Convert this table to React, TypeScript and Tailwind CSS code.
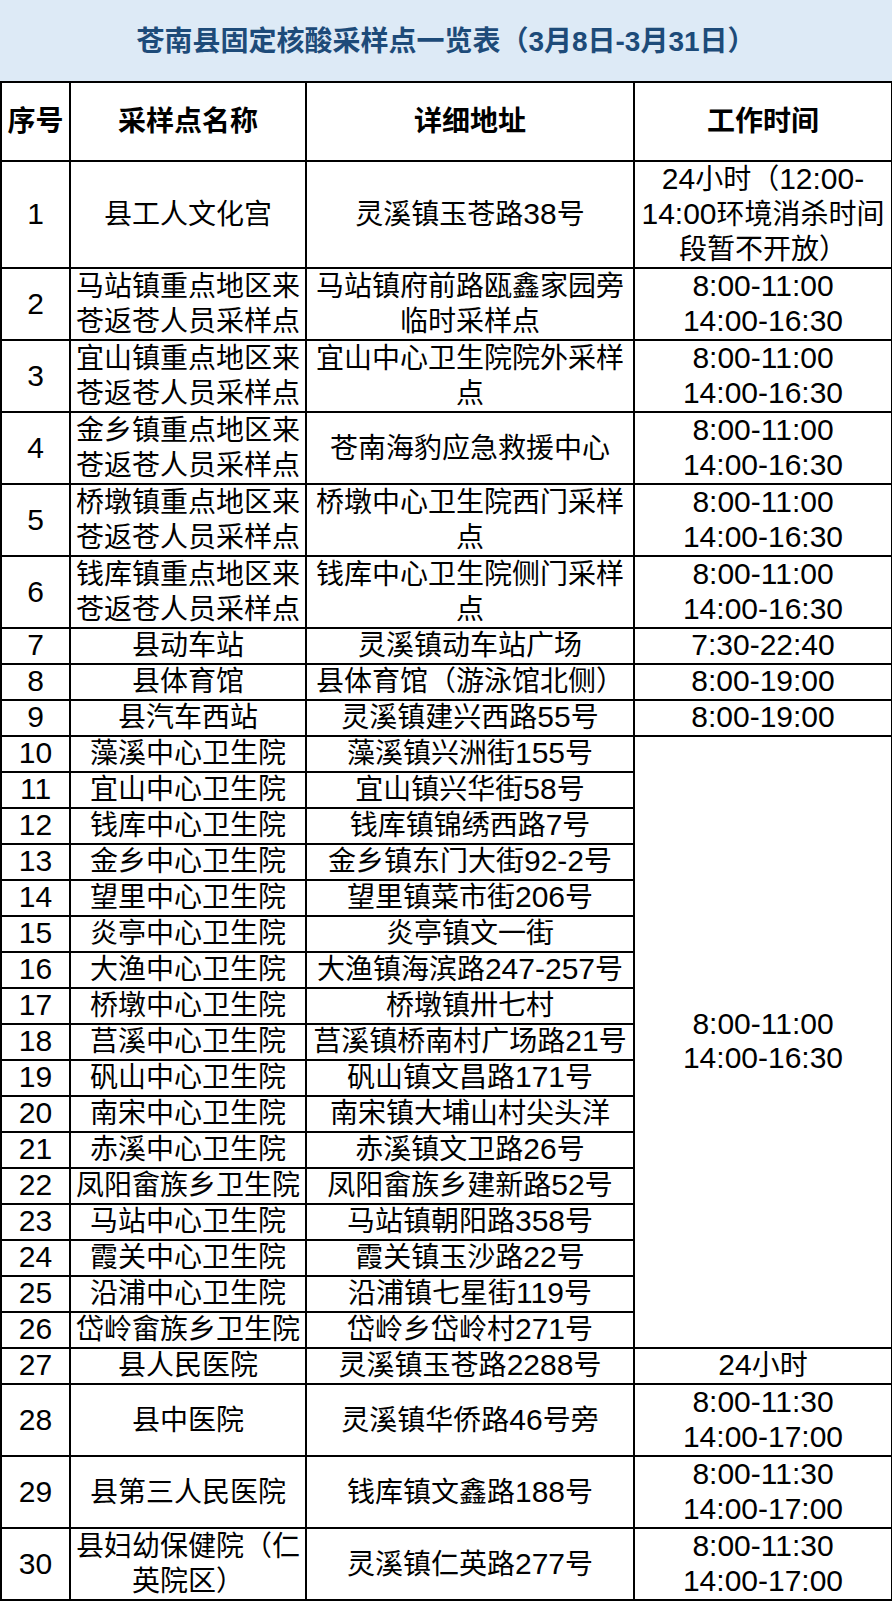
import React from 'react';

type Row = {
  no: number;
  name: string;
  addr: string;
  time?: string;
  span?: number;
};

const twoShift = '8:00-11:00\n14:00-16:30';
const lateShift = '8:00-11:30\n14:00-17:00';

const rows: Row[] = [
  { no: 1, name: '县工人文化宫', addr: '灵溪镇玉苍路38号', time: '24小时（12:00-\n14:00环境消杀时间\n段暂不开放）' },
  { no: 2, name: '马站镇重点地区来\n苍返苍人员采样点', addr: '马站镇府前路瓯鑫家园旁\n临时采样点', time: twoShift },
  { no: 3, name: '宜山镇重点地区来\n苍返苍人员采样点', addr: '宜山中心卫生院院外采样\n点', time: twoShift },
  { no: 4, name: '金乡镇重点地区来\n苍返苍人员采样点', addr: '苍南海豹应急救援中心', time: twoShift },
  { no: 5, name: '桥墩镇重点地区来\n苍返苍人员采样点', addr: '桥墩中心卫生院西门采样\n点', time: twoShift },
  { no: 6, name: '钱库镇重点地区来\n苍返苍人员采样点', addr: '钱库中心卫生院侧门采样\n点', time: twoShift },
  { no: 7, name: '县动车站', addr: '灵溪镇动车站广场', time: '7:30-22:40' },
  { no: 8, name: '县体育馆', addr: '县体育馆（游泳馆北侧）', time: '8:00-19:00' },
  { no: 9, name: '县汽车西站', addr: '灵溪镇建兴西路55号', time: '8:00-19:00' },
  { no: 10, name: '藻溪中心卫生院', addr: '藻溪镇兴洲街155号', time: twoShift, span: 17 },
  { no: 11, name: '宜山中心卫生院', addr: '宜山镇兴华街58号' },
  { no: 12, name: '钱库中心卫生院', addr: '钱库镇锦绣西路7号' },
  { no: 13, name: '金乡中心卫生院', addr: '金乡镇东门大街92-2号' },
  { no: 14, name: '望里中心卫生院', addr: '望里镇菜市街206号' },
  { no: 15, name: '炎亭中心卫生院', addr: '炎亭镇文一街' },
  { no: 16, name: '大渔中心卫生院', addr: '大渔镇海滨路247-257号' },
  { no: 17, name: '桥墩中心卫生院', addr: '桥墩镇卅七村' },
  { no: 18, name: '莒溪中心卫生院', addr: '莒溪镇桥南村广场路21号' },
  { no: 19, name: '矾山中心卫生院', addr: '矾山镇文昌路171号' },
  { no: 20, name: '南宋中心卫生院', addr: '南宋镇大埔山村尖头洋' },
  { no: 21, name: '赤溪中心卫生院', addr: '赤溪镇文卫路26号' },
  { no: 22, name: '凤阳畲族乡卫生院', addr: '凤阳畲族乡建新路52号' },
  { no: 23, name: '马站中心卫生院', addr: '马站镇朝阳路358号' },
  { no: 24, name: '霞关中心卫生院', addr: '霞关镇玉沙路22号' },
  { no: 25, name: '沿浦中心卫生院', addr: '沿浦镇七星街119号' },
  { no: 26, name: '岱岭畲族乡卫生院', addr: '岱岭乡岱岭村271号' },
  { no: 27, name: '县人民医院', addr: '灵溪镇玉苍路2288号', time: '24小时' },
  { no: 28, name: '县中医院', addr: '灵溪镇华侨路46号旁', time: lateShift },
  { no: 29, name: '县第三人民医院', addr: '钱库镇文鑫路188号', time: lateShift },
  { no: 30, name: '县妇幼保健院（仁\n英院区）', addr: '灵溪镇仁英路277号', time: lateShift },
];

// digits in the screenshot are a touch bigger than the CJK text
function Txt({ s }: { s: string }) {
  const lines = s.split('\n');
  return (
    <>
      {lines.map((line, i) => (
        <React.Fragment key={i}>
          {i > 0 && <br />}
          {line.split(/([0-9:\-]+)/).map((part, j) =>
            /^[0-9:\-]+$/.test(part) ? (
              <span key={j} className="text-[30px] leading-[0]">
                {part}
              </span>
            ) : (
              part
            )
          )}
        </React.Fragment>
      ))}
    </>
  );
}

const cell = 'border-2 border-black text-center align-middle whitespace-nowrap p-0';

export default function App() {
  return (
    <div
      className="w-[892px] bg-white text-black"
      style={{ fontFamily: '"Liberation Sans", "Noto Sans CJK SC", sans-serif' }}
    >
      <div className="h-[81px] bg-[#ddeaf6] flex items-center justify-center pt-[2px]">
        <h1 className="text-[28px] font-semibold text-[#1d4b79]">
          苍南县固定核酸采样点一览表（3月8日-3月31日）
        </h1>
      </div>
      <table className="w-[891px] border-collapse table-fixed text-[28px] leading-[34px]">
        <colgroup>
          <col className="w-[69px]" />
          <col className="w-[236px]" />
          <col className="w-[328px]" />
          <col className="w-[258px]" />
        </colgroup>
        <thead>
          <tr className="h-[79px]">
            <th className={`${cell} font-bold`}>序号</th>
            <th className={`${cell} font-bold`}>采样点名称</th>
            <th className={`${cell} font-bold`}>详细地址</th>
            <th className={`${cell} font-bold`}>工作时间</th>
          </tr>
        </thead>
        <tbody>
          {rows.map((r) => {
            const multi = r.no <= 6 || r.no >= 28;
            return (
              <tr key={r.no} className={multi ? 'leading-[35px]' : ''}>
                <td className={cell}>
                  <Txt s={String(r.no)} />
                </td>
                <td className={cell}>
                  <Txt s={r.name} />
                </td>
                <td className={cell}>
                  <Txt s={r.addr} />
                </td>
                {r.time !== undefined && (
                  <td className={cell} rowSpan={r.span ?? 1}>
                    <Txt s={r.time} />
                  </td>
                )}
              </tr>
            );
          })}
        </tbody>
      </table>
    </div>
  );
}
